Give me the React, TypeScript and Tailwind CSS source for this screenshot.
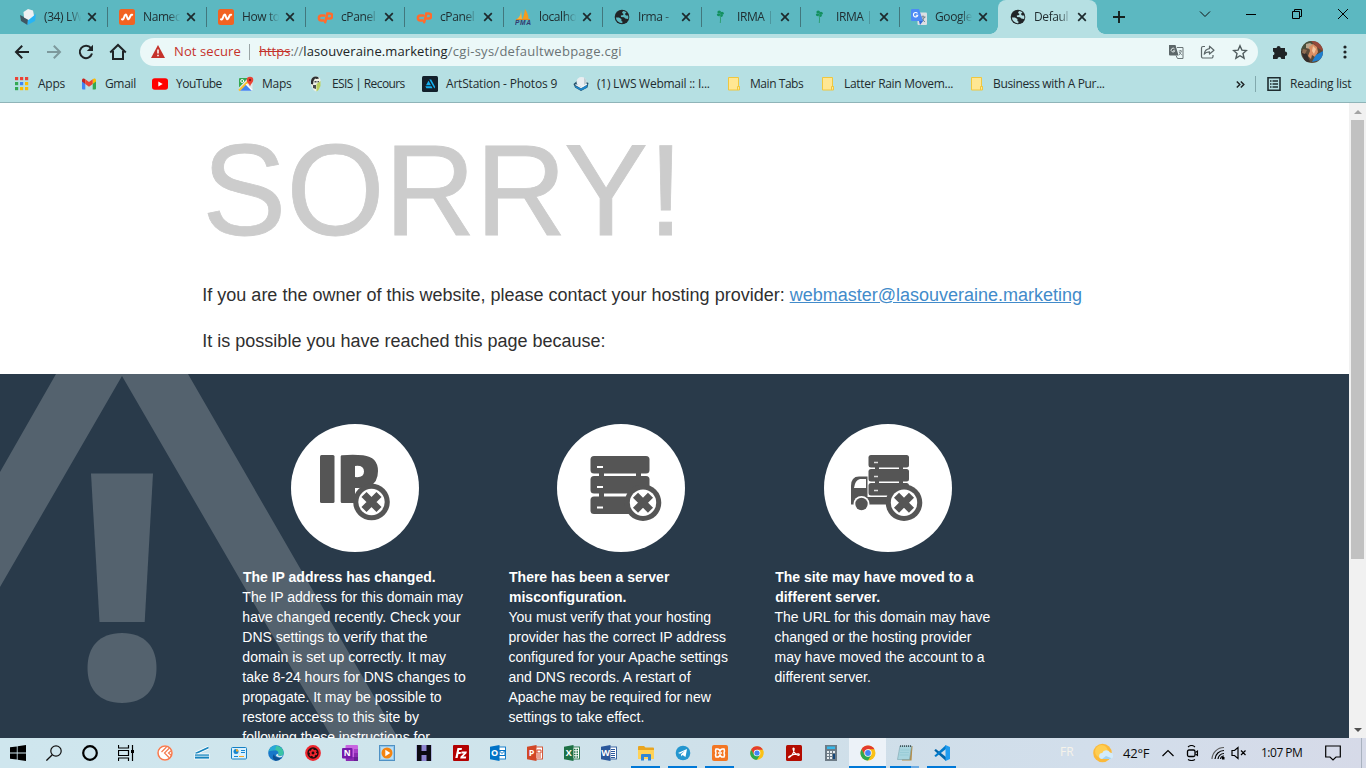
import React, { ReactNode } from 'react';

type IconProps = { children: ReactNode; className?: string; box?: string };

function Icon({ children, className = 'h-4 w-4', box = '0 0 16 16' }: IconProps) {
  return (
    <svg viewBox={box} className={`shrink-0 ${className}`} fill="none">
      {children}
    </svg>
  );
}

/* ---------- Favicons ---------- */

const LwsCube = () => (
  <Icon>
    <path d="M0 6 8 10 7.500 16 1 12Z" fill="#3f5661" />
    <path d="M8 10 16 5 15 12 7.500 16Z" fill="#27b4f5" />
    <path d="M3.500 3 8 0 13 1.500 14 6.500 8.500 11 4 8.500Z" fill="#eef0f2" />
  </Icon>
);

const Namecheap = () => (
  <Icon>
    <rect width="16" height="16" rx="2.500" fill="#f26322" />
    <path d="M3 10.300C4.200 10.800 4.800 9.400 5.800 6.300 7 4.600 7.400 6 8 8 8.800 10.600 9.200 10.800 10.200 9.400L11.800 6.200Q12.200 5.500 13.200 5.700" stroke="#fff" strokeWidth="2" strokeLinecap="round" />
  </Icon>
);

const CPanelIcon = () => (
  <Icon>
    <path d="M7.200 6.600H4.400a2.500 2.500 0 0 0 0 5h1.800M8.200 13.200 10.400 4.400h2.200a2.600 2.600 0 0 1 0 5.200H10" stroke="#ff6c2c" strokeWidth="2.500" strokeLinecap="round" />
  </Icon>
);

const PmaIcon = () => (
  <Icon>
    <path d="M6 1C6 5 5 8 2 10h5Z" fill="#fbb23b" />
    <path d="M10 0C9.500 4 8.500 8 7.500 10h6C13.500 6 12 3 10 0Z" fill="#f89b1c" />
    <path d="M1 10.500h14" stroke="#e28a20" />
    <text x="0" y="16" fontSize="6.600" fontWeight="bold" fontStyle="italic" fontFamily="Liberation Sans, sans-serif" fill="#33386f" textLength="16">PMA</text>
  </Icon>
);

const Globe = ({ bg }: { bg: string }) => (
  <Icon>
    <circle cx="8" cy="8" r="7.300" fill="#202427" />
    <path d="M9.400 2C7.600 3 7.800 4.400 9.300 4.700V6L6.800 6.600 7 8l3 .2 1.200 1.200 2.900.6a6.300 6.300 0 0 0 0-3.600L12 6.600 10.900 5l1.600-1.700Q11 2.200 9.400 2Z" fill={bg} />
    <path d="M1.900 8.400H5L7.400 10v2l1.200.8-.4 1.500A6.300 6.300 0 0 1 1.900 8.400Z" fill={bg} />
  </Icon>
);

const Clover = () => (
  <Icon>
    <g fill="#13905f">
      <ellipse cx="6.200" cy="3" rx="1.800" ry="1.500" />
      <ellipse cx="9" cy="4.200" rx="1.800" ry="1.500" />
      <ellipse cx="5.600" cy="5.800" rx="1.700" ry="1.400" />
      <ellipse cx="8.300" cy="6.600" rx="1.500" ry="1.300" />
    </g>
    <path d="M7 6Q8 10 7.300 14" stroke="#2fa074" />
  </Icon>
);

const TranslateFav = () => (
  <Icon>
    <rect x="6.500" y="3.500" width="9.500" height="12.500" rx="1" fill="#dcdfe3" />
    <path d="M9.500 8h5M12 6.500V8M10.500 13 13.600 8M10.500 9l3.300 4" stroke="#66757f" strokeWidth=".9" />
    <path d="M1 0h7l4 12H1a1 1 0 0 1-1-1V1a1 1 0 0 1 1-1Z" fill="#4c8bf5" />
    <path d="m8 12 4 0-3 4Z" fill="#3367d6" />
    <path d="M6.500 4.500a2.200 2.200 0 1 0 .3 1.700H4.800" stroke="#fff" strokeWidth="1.100" />
  </Icon>
);

const Close = () => (
  <Icon className="h-[10px] w-[10px]" box="0 0 10 10">
    <path d="m1.200 1.200 7.600 7.600m0-7.600L1.200 8.800" stroke="#1d2a2d" strokeWidth="1.700" />
  </Icon>
);

type TabData = { title: string; icon: ReactNode; active?: boolean };

const tabs: TabData[] = [
  { title: '(34) LW', icon: <LwsCube /> },
  { title: 'Namec', icon: <Namecheap /> },
  { title: 'How to', icon: <Namecheap /> },
  { title: 'cPanel', icon: <CPanelIcon /> },
  { title: 'cPanel', icon: <CPanelIcon /> },
  { title: 'localho', icon: <PmaIcon /> },
  { title: 'Irma -', icon: <Globe bg="#5cb8c1" /> },
  { title: 'IRMA |', icon: <Clover /> },
  { title: 'IRMA |', icon: <Clover /> },
  { title: 'Google', icon: <TranslateFav /> },
  { title: 'Defaul', icon: <Globe bg="#b6e0e3" />, active: true },
];

function Tab({ tab, divider }: { tab: TabData; divider: boolean }) {
  return (
    <div
      className={`relative flex h-[34px] w-[99px] shrink-0 items-center pl-3 ${tab.active ? 'rounded-t-lg bg-[#b6e0e3]' : ''}`}
    >
      {tab.icon}
      <div className="ml-2 w-[38px] [mask-image:linear-gradient(to_right,#000_66%,transparent_98%)]">
        <span className="block whitespace-nowrap text-[12px] tracking-[-0.4px] text-[#1f2c2f]">{tab.title}</span>
      </div>
      <div className="ml-[5px] flex">
        <Close />
      </div>
      {divider && <div className="absolute right-[-1px] top-[7px] h-5 w-px bg-[#42777d]" />}
      {tab.active && (
        <>
          <div className="absolute -left-2 bottom-0 h-2 w-2 bg-[radial-gradient(circle_at_0_0,transparent_7.5px,#b6e0e3_8px)]" />
          <div className="absolute -right-2 bottom-0 h-2 w-2 bg-[radial-gradient(circle_at_100%_0,transparent_7.5px,#b6e0e3_8px)]" />
        </>
      )}
    </div>
  );
}

function TabStrip() {
  return (
    <div className="flex h-[34px] bg-[#5cb8c1] pl-2">
      {tabs.map((t, i) => (
        <Tab key={i} tab={t} divider={i < 9} />
      ))}
      <div className="flex w-[44px] items-center justify-center">
        <Icon className="h-3 w-3" box="0 0 12 12">
          <path d="M6 0v12M0 6h12" stroke="#15211f" strokeWidth="1.900" />
        </Icon>
      </div>
      <div className="flex flex-1 items-center pb-[6px] pl-[58px]">
        <Icon className="h-3 w-3" box="0 0 12 12">
          <path d="m1 3.500 5 5 5-5" stroke="#111" />
        </Icon>
        <Icon className="ml-[34px] h-3 w-3" box="0 0 12 12">
          <path d="M1 6.500h10" stroke="#000" />
        </Icon>
        <Icon className="ml-[34px] h-3 w-3" box="0 0 12 12">
          <path d="M1.500 3.500h7v7h-7zM3.500 3.500v-2h7v7h-2" stroke="#000" />
        </Icon>
        <Icon className="ml-[34px] h-3 w-3" box="0 0 12 12">
          <path d="m1 1 10 10M11 1 1 11" stroke="#000" />
        </Icon>
      </div>
    </div>
  );
}

/* ---------- Toolbar ---------- */

function Toolbar() {
  return (
    <div className="flex h-9 items-center bg-[#b6e0e3] pl-[14px]">
      <Icon>
        <path d="M15 8H2M8.200 1.800 2 8l6.200 6.200" stroke="#1f2426" strokeWidth="2" />
      </Icon>
      <Icon className="ml-4 h-4 w-4">
        <path d="M1 8h13M7.800 1.800 14 8l-6.200 6.200" stroke="#7d999c" strokeWidth="2" />
      </Icon>
      <Icon className="ml-4 h-4 w-4">
        <path d="M13 4.200A6.200 6.200 0 1 0 14 9.600" stroke="#1f2426" strokeWidth="2" />
        <path d="M15 .8V7H8.800Z" fill="#1f2426" />
      </Icon>
      <Icon className="ml-[15px] h-[18px] w-[18px]" box="0 0 18 18">
        <path d="M1.200 9.400 9 2l7.800 7.400M4 8v8h10V8" stroke="#1f2426" strokeWidth="2" />
      </Icon>
      <div className="ml-[13px] flex h-7 w-[1118px] items-center rounded-full bg-[#ebf8f8] pl-[11px]">
        <Icon className="h-[14px] w-[14px]" box="0 0 14 14">
          <path d="M7 0 14 13H0Z" fill="#c5322b" />
          <path d="M7 4.500v4M7 9.700v1.500" stroke="#fff" strokeWidth="1.500" />
        </Icon>
        <span className="ml-[9px] w-[75px] whitespace-nowrap text-[13px] tracking-[0.1px] text-[#c5322b]">Not secure</span>
        <div className="h-4 w-px bg-[#9aa5a6]" />
        <div className="ml-[9px] flex-1 whitespace-nowrap text-[13px] text-[#6a7375]">
          <span className="text-[#c5322b] line-through">https</span>://
          <span className="tracking-[0.09px] text-[#202426]">lasouveraine.marketing</span>
          <span className="tracking-[0.27px]">/cgi-sys/defaultwebpage.cgi</span>
        </div>
        <Icon>
          <path d="M1 1h6.500l3 10.500H2a1 1 0 0 1-1-1Z" fill="#5c6769" />
          <path d="M9 3.500h6v11H9.500L8 11.500" stroke="#6a7577" />
          <path d="M6.600 5a1.900 1.900 0 1 0 .2 1.800H5" stroke="#dfe8e8" />
          <path d="M10.700 7h3.400M12.400 6v1M11 11.200 13.500 7.400M11 8l3 3.200" stroke="#6a7577" strokeWidth=".8" />
        </Icon>
        <Icon className="ml-4 h-4 w-4">
          <path d="M5 2.500H3A1.500 1.500 0 0 0 1.500 4v8.500A1.500 1.500 0 0 0 3 14h8.500a1.500 1.500 0 0 0 1.500-1.500V11" stroke="#5c6769" strokeWidth="1.200" />
          <path d="M9.500 2.200 14 6.200 9.500 10V7.800C7 7.700 5.300 8.600 4.200 10.200 4.600 7 6.500 5 9.500 4.600Z" stroke="#5c6769" strokeWidth="1.200" strokeLinejoin="round" />
        </Icon>
        <Icon className="ml-4 mr-[10px] h-4 w-4">
          <path d="m8 1.800 1.900 4.300 4.600.4L11 9.600l1.100 4.600L8 11.700l-4.100 2.500L5 9.600 1.500 6.500l4.600-.4Z" stroke="#505c5e" strokeWidth="1.400" />
        </Icon>
      </div>
      <Icon className="ml-[14px] h-4 w-4">
        <path d="M1 4h3.600a2 2 0 1 1 4 0H13v3.500a2.200 2.200 0 1 1 0 4.400V15H9.300a1.900 1.900 0 0 0-3.800 0H1v-3.700a1.900 1.900 0 0 0 0-3.700Z" fill="#1f2426" />
      </Icon>
      <svg viewBox="0 0 22 22" className="ml-[13px] h-[22px] w-[22px] shrink-0 rounded-full">
        <rect width="22" height="22" fill="#5a4a38" />
        <path d="M0 0h12L9 6 0 9Z" fill="#46503c" />
        <path d="M10 0h12v10l-5-3Z" fill="#96483a" />
        <path d="M5 3l4-1 3 2-3 4-4-1Z" fill="#b9a58b" />
        <path d="M8 6l4-3 4 3 1 5-3 5-3-2-1 4-3-3 2-5Z" fill="#d98d62" />
        <path d="m12 5 3 3-2 5-2-3Z" fill="#f1c6a0" />
        <path d="M15 14l7-4v8l-7 2-4 1 2-4Z" fill="#1e7fd0" />
        <path d="M0 10l6 3 3 8H4Z" fill="#332d2b" />
        <path d="M2 8l4 1-2 4-3-1Z" fill="#8f6d52" />
      </svg>
      <Icon className="ml-[14px] h-4 w-4">
        <g fill="#1f2426">
          <circle cx="8" cy="3" r="1.600" />
          <circle cx="8" cy="8" r="1.600" />
          <circle cx="8" cy="13" r="1.600" />
        </g>
      </Icon>
    </div>
  );
}

/* ---------- Bookmarks ---------- */

const appColors = ['#ea4335', '#ea4335', '#ea4335', '#34a853', '#4285f4', '#fbbc04', '#34a853', '#fbbc04', '#fbbc04'];

const AppsIcon = () => (
  <Icon>
    {appColors.map((c, i) => (
      <rect key={i} x={1 + (i % 3) * 5} y={1 + Math.floor(i / 3) * 5} width="3.200" height="3.200" fill={c} />
    ))}
  </Icon>
);

const GmailIcon = () => (
  <Icon>
    <path d="M1 4v8.500a1 1 0 0 0 1 1h2.300V7Z" fill="#4285f4" />
    <path d="M15 4v8.500a1 1 0 0 1-1 1h-2.300V7Z" fill="#34a853" />
    <path d="M1 4.200C1 2.400 2.900 2 4.300 3.200V8L1 5.500Z" fill="#c5221f" />
    <path d="M15 4.200c0-1.800-1.900-2.200-3.300-1V8L15 5.500Z" fill="#fbbc04" />
    <path d="M4.300 3.200 8 6l3.700-2.800V8L8 10.800 4.300 8Z" fill="#ea4335" />
  </Icon>
);

const YoutubeIcon = () => (
  <Icon>
    <rect y="2.300" width="16" height="11.500" rx="2.800" fill="#f00" />
    <path d="m6.300 5.600 4.400 2.500-4.400 2.500Z" fill="#fff" />
  </Icon>
);

const MapsIcon = () => (
  <Icon>
    <rect x="1" y="2" width="13.500" height="13" rx="1.500" fill="#e4e8ea" />
    <path d="M2 2h8L1 11.500V3a1 1 0 0 1 1-1Z" fill="#34a853" />
    <path d="M1.500 14.700 8 8.200l6.300 6.500Z" fill="#4285f4" />
    <path d="m1 14.500 11-11" stroke="#fbc02d" strokeWidth="2" />
    <path d="m8.200 8.300 6 6" stroke="#fff" strokeWidth="1.300" />
    <path d="M12 10.500C11.500 8 8.700 6.500 8.700 4a3.300 3.300 0 0 1 6.600 0c0 2.500-2.800 4-3.300 6.500Z" fill="#ea4335" />
    <circle cx="12" cy="4" r="1.200" fill="#8c1d18" />
    <circle cx="4.200" cy="5" r="1.500" stroke="#fff" />
  </Icon>
);

const EsisIcon = () => (
  <Icon>
    <path d="M3 4q1-3.500 5-3.500T12.500 4L12 10l-2 4-2 1.500L5.500 14 3 9Z" fill="#eef0e4" />
    <path d="M3 5Q3.500.5 8 .5q2.500 0 3 2L8.500 3 7 2.500 5.500 5 5 8.500 3 8Z" fill="#2e2f31" />
    <path d="M6.500 5h2v1.500h-2zM9.500 5h1.500v1.500H9.500zM5 9h3v4L5 12z" fill="#474a4d" />
    <path d="m8.500 8 4-3v5l-2 4-2 1.500Z" fill="#b8cf5d" />
  </Icon>
);

const ArtStationIcon = () => (
  <Icon>
    <rect width="16" height="16" rx="1.500" fill="#12202b" />
    <path d="M7.300 3.500h1.900l4 7.500-.8 1.500ZM6.500 4.800 9 9.200H4ZM3.300 10.200h6.200l1.100 2H4.400Z" fill="#13aff0" />
  </Icon>
);

const LwsMail = () => (
  <Icon>
    <path d="m.5 8 6-5 9 4-1 4.500L8 15l-6-3.500Z" fill="#23506a" />
    <path d="m1.500 9.500 6.500 3 6.500-4-1 3.500L8 14.600l-5-2.800Z" fill="#1c86cc" />
    <circle cx="8.500" cy="6" r="5" fill="#e9eef1" />
    <path d="M11 1.700a5 5 0 0 1 0 8.600Z" fill="#c2ced4" />
    <path d="m2.500 8.500 5.500 3 6-3.500" stroke="#f4f8fa" strokeWidth="1.200" />
  </Icon>
);

const FolderMark = () => (
  <Icon>
    <path d="M2.500 1.500h10v9h1v3.500h-11Z" fill="#ffe793" stroke="#efc73f" />
    <path d="M11.500 14v-3.500h2" stroke="#efc73f" />
  </Icon>
);

const bookmarks = [
  { label: 'Apps', icon: <AppsIcon />, cls: 'w-[67px]' },
  { label: 'Gmail', icon: <GmailIcon />, cls: 'w-[71px] tracking-[-0.35px]' },
  { label: 'YouTube', icon: <YoutubeIcon />, cls: 'w-[86px] tracking-[-0.5px]' },
  { label: 'Maps', icon: <MapsIcon />, cls: 'w-[70px]' },
  { label: 'ESIS | Recours', icon: <EsisIcon />, cls: 'w-[114px] tracking-[-0.6px]' },
  { label: 'ArtStation - Photos 9', icon: <ArtStationIcon />, cls: 'w-[151px] tracking-[-0.2px]' },
  { label: '(1) LWS Webmail :: I...', icon: <LwsMail />, cls: 'w-[153px]' },
  { label: 'Main Tabs', icon: <FolderMark />, cls: 'w-[94px] tracking-[-0.45px]' },
  { label: 'Latter Rain Movem...', icon: <FolderMark />, cls: 'w-[149px] tracking-[-0.3px]' },
  { label: 'Business with A Pur...', icon: <FolderMark />, cls: 'w-[150px] tracking-[-0.35px]' },
];

function BookmarksBar() {
  return (
    <div className="flex h-[33px] items-center border-b border-[#8fb4b8] bg-[#b6e0e3] pb-1 pl-[14px] text-[12px] tracking-[-0.25px] text-[#1f2c2f]">
      {bookmarks.map((b) => (
        <div key={b.label} className={`flex shrink-0 items-center gap-2 whitespace-nowrap ${b.cls}`}>
          {b.icon}
          {b.label}
        </div>
      ))}
      <Icon className="ml-[117px] h-[9px] w-[9px]" box="0 0 9 9">
        <path d="m.8 1.500 3 3-3 3m4-6 3 3-3 3" stroke="#1f2426" strokeWidth="1.500" />
      </Icon>
      <div className="ml-[10px] h-4 w-px bg-[#82a9ad]" />
      <Icon className="ml-[10px] h-4 w-4">
        <path d="M2 1.800h12v12.400H2z" stroke="#1f2c2f" strokeWidth="1.600" />
        <path d="M4 5h1.500M4 8h1.500M4 11h1.500M6.500 5h5.500M6.500 8h5.500M6.500 11h5.500" stroke="#1f2c2f" strokeWidth="1.300" />
      </Icon>
      <span className="ml-[8px] whitespace-nowrap">Reading list</span>
    </div>
  );
}

/* ---------- Page ---------- */

const CrossBadge = ({ cx, cy }: { cx: number; cy: number }) => (
  <g>
    <circle cx={cx} cy={cy} r="18.300" fill="#555" />
    <circle cx={cx} cy={cy} r="13.200" fill="#fff" />
    <path
      d={`M${cx - 7.5} ${cy - 7.5}l15 15m0-15l-15 15`}
      stroke="#555"
      strokeWidth="7.200"
    />
  </g>
);

const IpArt = () => (
  <>
    <rect x="29" y="31" width="14.500" height="48" rx="1.500" fill="#555" />
    <path fillRule="evenodd" d="M51 31.200q11-1 21 0Q87 33 87 47q0 12-9 15.500-5 2-14 1.500V79H51q-1.300 0-1.300-1.500v-45Q49.700 31.200 51 31.200ZM64 42v11q9 1 9-5.500T64 42Z" fill="#555" />
    <CrossBadge cx={80.5} cy={78} />
  </>
);

const ServerArt = () => (
  <>
    <g fill="#555">
      <rect x="33.500" y="32" width="59" height="17.500" rx="3.500" />
      <rect x="33.500" y="52" width="59" height="17.500" rx="3.500" />
      <rect x="33.500" y="72.500" width="59" height="17.500" rx="3.500" />
      <path d="M42 48h5v26h-5zM79 48h5v26h-5z" />
    </g>
    <path d="M40 43h6M40 63h6M40 83.500h6" stroke="#fff" strokeWidth="2" />
    <CrossBadge cx={86} cy={78.7} />
  </>
);

const TruckArt = () => (
  <>
    <g fill="#555">
      <rect x="44.500" y="31" width="40.500" height="12.500" rx="2.500" />
      <rect x="44.500" y="45" width="40.500" height="12.500" rx="2.500" />
      <rect x="44.500" y="59" width="40.500" height="12.500" rx="2.500" />
      <path d="M51 43h4v17h-4zM75 43h4v17h-4z" />
      <path fillRule="evenodd" d="M27 80.500V62q0-9.500 8-9.500h8.500V73H70v7.500ZM30 64h12v-9h-6q-5 1-6 9Z" />
    </g>
    <path d="M50 38.500h4M50 52.500h4M50 66.500h4" stroke="#ddd" strokeWidth="1.300" />
    <circle cx="37.500" cy="80" r="8" fill="#fff" />
    <circle cx="37.500" cy="80" r="6.200" fill="#555" />
    <CrossBadge cx={80} cy={78.7} />
  </>
);

const reasons = [
  {
    title: 'The IP address has changed.',
    art: <IpArt />,
    body: 'The IP address for this domain may have changed recently. Check your DNS settings to verify that the domain is set up correctly. It may take 8-24 hours for DNS changes to propagate. It may be possible to restore access to this site by following these instructions for',
  },
  {
    title: 'There has been a server misconfiguration.',
    art: <ServerArt />,
    body: 'You must verify that your hosting provider has the correct IP address configured for your Apache settings and DNS records. A restart of Apache may be required for new settings to take effect.',
  },
  {
    title: 'The site may have moved to a different server.',
    art: <TruckArt />,
    body: 'The URL for this domain may have changed or the hosting provider may have moved the account to a different server.',
  },
];

function DefaultPage() {
  return (
    <div className="flex min-w-0 flex-1 flex-col overflow-hidden bg-white font-['Liberation_Sans',Arial,sans-serif] text-[#2f2f2f]">
      <div className="h-[271px] shrink-0 pl-[202.35px] pt-[26px]">
        <h1 className="origin-[0_107px] scale-y-[1.03] text-[126px] leading-[126px] text-[#ccc] [-webkit-text-stroke:0.8px_#ccc]">
          SORRY!
        </h1>
        <p className="mt-[27px] text-[18px] leading-[26px]">
          If you are the owner of this website, please contact your hosting provider:{' '}
          <a className="text-[#428bca] underline">webmaster@lasouveraine.marketing</a>
        </p>
        <p className="mt-5 text-[18px] leading-[26px]">It is possible you have reached this page because:</p>
      </div>
      <div className="relative flex-1 bg-[#293a4a]">
        <svg viewBox="0 0 420 364" className="absolute left-0 top-0 h-[364px] w-[420px]">
          <g fill="#54626e">
            <path d="M56 0H188L398 364H332L122 2 0 213V98Z" />
            <path d="M91 99.500h62L144.700 248H99.500Z" />
            <path d="M122 259c23 0 34.500 14 34.500 35S145 329 122 329s-34.500-14-34.500-35S99 259 122 259Z" />
          </g>
        </svg>
        <div className="relative flex gap-[40.1px] pl-[242.35px] pt-[50px]">
          {reasons.map((r) => (
            <div key={r.title} className="w-[226px] shrink-0 text-[14px] leading-5 text-white">
              <svg viewBox="0 0 128 128" className="mx-auto mb-[15px] block h-32 w-32">
                <circle cx="64" cy="64" r="64" fill="#fff" />
                {r.art}
              </svg>
              <strong className="block pl-[0.6px] font-bold">{r.title}</strong>
              <p>{r.body}</p>
            </div>
          ))}
        </div>
      </div>
    </div>
  );
}

function Scrollbar() {
  return (
    <div className="flex w-[17px] shrink-0 flex-col items-center bg-[#f1f1f1]">
      <div className="flex h-[17px] items-center">
        <Icon className="h-2 w-2" box="0 0 8 8">
          <path d="m0 6 4-4 4 4Z" fill="#a3a3a3" />
        </Icon>
      </div>
      <div className="h-[439px] w-[13px] bg-[#c1c1c1]" />
      <div className="mt-auto flex h-[17px] items-center">
        <Icon className="h-2 w-2" box="0 0 8 8">
          <path d="m0 2 4 4 4-4Z" fill="#505050" />
        </Icon>
      </div>
    </div>
  );
}

/* ---------- Taskbar ---------- */

const glyphFont = 'Open Sans, sans-serif';

const Office = ({ c, letter, children }: { c: string; letter: string; children: ReactNode }) => (
  <>
    <rect x="8" y="2" width="7.500" height="12" fill="#fff" stroke={c} strokeWidth=".9" />
    {children}
    <path d="M0 1.800 9.500 0v16L0 14.200Z" fill={c} />
    <text x="4.700" y="11.300" textAnchor="middle" fontSize="9" fontWeight="bold" fontFamily={glyphFont} fill="#fff">{letter}</text>
  </>
);

const Chrome = () => (
  <>
    <circle cx="8" cy="8" r="7.500" fill="#fbc116" />
    <path d="M1.500 4.250A7.500 7.500 0 0 1 14.500 4.250H8L4.700 9.900Z" fill="#e33b2e" />
    <path d="M1.500 4.250A7.500 7.500 0 0 0 8 15.500L11.300 9.900H4.700Z" fill="#2da94f" />
    <circle cx="8" cy="8" r="3.700" fill="#fff" />
    <circle cx="8" cy="8" r="2.900" fill="#4285f4" />
  </>
);

type TaskItem = { name: string; art: ReactNode; state?: 'open' | 'active' };

const taskItems: TaskItem[] = [
  {
    name: 'clock',
    art: (
      <>
        <circle cx="8" cy="8" r="7.800" fill="#fff" />
        <circle cx="8" cy="8" r="7" stroke="#f47b50" strokeWidth="1.600" />
        <path d="M12.500 3 7.500 8l5 5M14.500 5.500 11.500 8l3 2.500M9.500 2 4.500 7" stroke="#f47b50" strokeWidth="1.200" />
      </>
    ),
  },
  {
    name: 'scanner',
    art: (
      <>
        <path d="M1.500 8.500 14.500 2.500" stroke="#fff" strokeWidth="3.400" />
        <path d="M1.500 8.500 14.500 2.500" stroke="#1784bd" strokeWidth="1.700" />
        <path d="M.5 9h15v5H.5z" fill="#1784bd" stroke="#fff" strokeWidth=".8" />
        <path d="M1 11.200h14" stroke="#d9eef7" />
      </>
    ),
  },
  {
    name: 'control',
    art: (
      <>
        <rect x=".5" y="2.500" width="15" height="11.500" rx="1" fill="#d9f1ff" stroke="#1580c4" />
        <circle cx="5" cy="6.500" r="2.500" fill="#1686d0" />
        <path d="M5 6.500V4a2.500 2.500 0 0 1 2.500 2.500Z" fill="#f7a823" />
        <path d="M10 5.500h4M10 7.500h4M3 11.500h4" stroke="#1686d0" />
        <path d="M8 11.500h5" stroke="#f7a823" />
      </>
    ),
  },
  {
    name: 'edge',
    art: (
      <>
        <circle cx="8" cy="8" r="7.800" fill="#1878c9" />
        <path d="M.5 6.500A7.800 7.800 0 0 1 15.800 8q-.3 3-3.600 2.800-3-.2-1.700-2.200Q10.500 5.500 7 5.300 3 5 .5 6.500Z" fill="#3bc3a5" />
        <path d="M.5 6.500Q3 .4 8.500.3L7 5.300Q3 5 .5 6.500Z" fill="#27a9d8" />
        <path d="M6 9q.5 4.500 7.500 3.700-3 3.800-6.500 3Q3 13 6 9Z" fill="#0d4f91" />
        <path d="M10.500 8.600q-1.500 2.300 1.700 2.400l3.200-.5q-3 3.500-7.500.5 0-2 2.600-2.400Z" fill="#d2e5ee" />
      </>
    ),
  },
  {
    name: 'gear',
    art: (
      <>
        <circle cx="8" cy="8" r="7.900" fill="#f0262f" />
        <circle cx="8" cy="8" r="5.700" fill="#200b0d" />
        <circle cx="8" cy="8" r="2.300" stroke="#f0262f" strokeWidth="1.700" />
        <circle cx="8" cy="8" r="3.600" stroke="#f0262f" strokeWidth="1.300" strokeDasharray="1.900 1.870" />
      </>
    ),
  },
  {
    name: 'onenote',
    art: (
      <>
        <rect x="3.500" width="12.500" height="16" rx="1" fill="#c865e0" />
        <path d="M12 4h4v4h-4z" fill="#a83fc8" />
        <path d="M12 8h4v4h-4zM4 12h8v4H4z" fill="#8a2bb0" />
        <path d="M12 12h4v4h-4z" fill="#6b1f95" />
        <rect y="3" width="10.500" height="10.500" rx="1" fill="#7719aa" />
        <text x="5.200" y="11.300" textAnchor="middle" fontSize="8.500" fontWeight="bold" fontFamily={glyphFont} fill="#fff">N</text>
      </>
    ),
  },
  {
    name: 'player',
    art: (
      <>
        <rect x=".5" y=".5" width="15" height="15" fill="#8fc4ea" stroke="#4f91c4" />
        <path d="M2 2h12v12H2z" fill="#b9def5" />
        <circle cx="8" cy="8" r="5.500" fill="#f58410" />
        <path d="m6.300 4.800 5 3.200-5 3.200Z" fill="#fff" />
      </>
    ),
  },
  {
    name: 'heidi',
    art: (
      <>
        <rect x=".5" width="15" height="16" fill="#8d84cf" />
        <path d="M1 0h4.500v6h5V0H15v16h-4.500v-6h-5v6H1Z" fill="#0c0b12" />
      </>
    ),
  },
  {
    name: 'filezilla',
    art: (
      <>
        <rect width="16" height="16" rx="1" fill="#b30000" />
        <path d="M4.500 3H9l-.4 2H6.200l-.4 2H8l-.4 2H5.400l-.8 4H2.300Z" fill="#fff" />
        <path d="M8.500 6.500h5.300l-.3 1.800-3.300 3.100h3l-.4 2H7.200l.4-2 3.200-3H8.200Z" fill="#fff" />
      </>
    ),
  },
  { name: 'outlook', art: <Office c="#0072c6" letter="O"><path d="M9 5.500h6v5H9zm0 0 3 3 3-3" stroke="#0072c6" fill="#fff" /></Office> },
  { name: 'powerpoint', art: <Office c="#d24726" letter="P"><path d="M10 5h4v3h-4zM10 10h4M10 12h4" stroke="#d24726" /></Office> },
  { name: 'excel', art: <Office c="#1e7145" letter="X"><path d="M10 4.500h1.500M12.500 4.500H14M10 7h1.500M12.500 7H14M10 9.500h1.500M12.500 9.500H14M10 12h1.500M12.500 12H14" stroke="#1e7145" strokeWidth="1.400" /></Office> },
  { name: 'word', art: <Office c="#2b579a" letter="W"><path d="M10 4.500h4M10 6.500h4M10 8.500h4M10 10.500h4M10 12.500h4" stroke="#2b579a" /></Office> },
  {
    name: 'explorer',
    state: 'open',
    art: (
      <>
        <path d="M0 2q0-1 1-1h5l1.500 1.500H15q1 0 1 1V6H0Z" fill="#e9a520" />
        <path d="M0 5h16v9H0Z" fill="#ffd257" />
        <path d="M3 15.500V10q0-1 1-1h8q1 0 1 1v5.500h-3V12H6v3.500Z" fill="#2f86d6" />
      </>
    ),
  },
  {
    name: 'telegram',
    state: 'open',
    art: (
      <>
        <circle cx="8" cy="8" r="7.300" fill="#2496cf" />
        <path d="m3 8 9-4-1.500 8-3-2-1.200 1.600L6 9.300l4-3.600-5 3Z" fill="#fff" />
      </>
    ),
  },
  {
    name: 'xampp',
    state: 'open',
    art: (
      <>
        <rect width="16" height="16" rx="2" fill="#f37623" />
        <path d="M4 4h1.500q2 0 2.500 2.500Q8.500 4 10.500 4H12q1 2 0 4 1 2 0 4h-1.500Q8.500 12 8 9.500 7.500 12 5.500 12H4Q3 10 4 8 3 6 4 4ZM6 8h4" stroke="#fff" strokeWidth="1.600" />
      </>
    ),
  },
  { name: 'chrome', art: <g transform="translate(.8 .8) scale(.9)"><Chrome /></g> },
  {
    name: 'acrobat',
    art: (
      <>
        <rect width="16" height="16" rx="1.500" fill="#b30b00" />
        <path d="M3 12.500c2-.6 5-4.500 5.200-8.500.1-1.400-1.500-1.200-1.200.2.500 3 3.500 6 5.500 6.200 1.200 0 1.100-1.500-.3-1.500-3 0-6 .8-8.700 2.300-1.400 1-.8 1.600-.5 1.300Z" stroke="#fff" strokeWidth="1.100" />
      </>
    ),
  },
  {
    name: 'calculator',
    art: (
      <>
        <rect x="2" width="12" height="16" fill="#6d7b86" />
        <rect x="4" y="1.500" width="8" height="2.500" fill="#35b8ea" />
        <path d="M4 7h2M7 7h2M4 10h2M7 10h2M4 13h2M7 13h2M10 7h2" stroke="#e6ecef" strokeWidth="1.800" />
        <path d="M11 9v5" stroke="#15477a" strokeWidth="2" />
      </>
    ),
  },
  { name: 'chrome-active', state: 'active', art: <Chrome /> },
  {
    name: 'notepad',
    state: 'open',
    art: (
      <>
        <path d="M4 1h11.500L14.500 15.500H5Z" fill="#b38d48" />
        <path d="M3 1h11.500L12.500 14.500H.5Z" fill="#a9d5df" stroke="#7aa5ae" strokeWidth=".6" />
        <path d="M3.500 5h9M3 7.500h9M2.500 10h9" stroke="#8fc6d1" strokeWidth=".6" />
        <path d="M3 1.200h11.500" stroke="#46555b" strokeWidth="1.800" strokeDasharray="1 1" />
      </>
    ),
  },
  {
    name: 'vscode',
    state: 'open',
    art: (
      <>
        <path d="m.3 5.300 1.500-1.300L12 12v4L.8 6Z" fill="#0065a9" />
        <path d="M.3 10.700 12 0v4L1.800 12Z" fill="#007acc" />
        <path d="m11.500 0 4.500 2v12l-4.500 2Z" fill="#1f9cf0" />
      </>
    ),
  },
];

function TaskButton({ item }: { item: TaskItem }) {
  return (
    <div
      className={`relative flex h-[30px] w-[37px] shrink-0 items-center justify-center ${item.state === 'active' ? 'bg-[#ecf2f8]' : ''}`}
    >
      <Icon>{item.art}</Icon>
      {item.state && (
        <div
          className={`absolute bottom-0 h-[2px] bg-[#0078d7] ${item.state === 'active' ? 'inset-x-0' : 'inset-x-[4px]'}`}
        />
      )}
      {item.name === 'notepad' && <div className="absolute bottom-0 right-[4px] h-[2px] w-2 bg-[#6cabe3]" />}
    </div>
  );
}

function Taskbar() {
  return (
    <div className="flex h-[30px] shrink-0 items-center bg-[linear-gradient(90deg,#cfe6ee_0%,#cfe5ec_30%,#cfdfe9_60%,#d2deeb_80%,#d6dae8_100%)]">
      <Icon className="ml-[10px] h-4 w-4">
        <path d="M0 2.300 6.800 1.400v6.100H0zM7.600 1.300 16 0v7.500H7.600zM0 8.400h6.800v6.200L0 13.700zM7.600 8.400H16V16l-8.400-1.300z" fill="#000" />
      </Icon>
      <Icon className="ml-5 h-4 w-4">
        <circle cx="10" cy="6" r="5.200" stroke="#111" strokeWidth="1.200" />
        <path d="M6.300 9.700.4 15.600" stroke="#111" strokeWidth="1.300" />
      </Icon>
      <Icon className="ml-5 h-4 w-4">
        <circle cx="8" cy="8" r="6.800" stroke="#000" strokeWidth="2.200" />
      </Icon>
      <Icon className="ml-5 h-4 w-4">
        <path d="M.5 0v3h10V0M.5 16v-3h10v3M.5 5.500h10v5H.5zM14.500 0v16" stroke="#000" strokeWidth="1.200" />
        <path d="M13 5h3v3h-3z" fill="#000" />
      </Icon>
      <div className="ml-[12px] flex">
        {taskItems.map((t) => (
          <TaskButton key={t.name} item={t} />
        ))}
      </div>
      <span className="ml-[100px] w-[33px] pb-[3px] text-[12px] text-[#f6f3ea]">FR</span>
      <Icon className="h-5 w-5" box="0 0 20 20">
        <circle cx="9.500" cy="10" r="9.300" fill="#fbb93a" />
        <circle cx="8.500" cy="8.500" r="6.500" fill="#ffce52" />
        <path d="M9 16a3 3 0 0 1 .2-6A4.200 4.200 0 0 1 17 9.600 3.200 3.200 0 0 1 17 16Z" fill="#d3ecfb" />
        <path d="M9 16h8l1.500-.8L13 13Z" fill="#9fd2f2" />
      </Icon>
      <span className="ml-[10px] w-[39px] whitespace-nowrap pt-px text-[13px] tracking-[-0.2px] text-[#0b0b0b]">42°F</span>
      <Icon className="h-3 w-3" box="0 0 12 12">
        <path d="m.5 9 5.500-5.500L11.500 9" stroke="#000" strokeWidth="1.200" />
      </Icon>
      <Icon className="ml-3 h-4 w-[14px]" box="0 0 14 16">
        <rect x="1.500" y="5" width="7.500" height="6.500" rx="1.500" stroke="#000" strokeWidth="1.300" />
        <path d="m9.500 7.500 2-1.500v4.500l-2-1.500M2 2Q5.500-1 9 2M2 14.500q3.500 2 7 0" stroke="#000" strokeWidth="1.100" />
      </Icon>
      <Icon className="ml-[11px] h-[14px] w-[14px]" box="0 0 14 14">
        <path d="M1 13A12 12 0 0 1 13 1.500" stroke="#555" strokeWidth="1.100" />
        <path d="M4 13a9 9 0 0 1 9-8.500M7 13a6 6 0 0 1 6-5.500M9.500 13a3.500 3.500 0 0 1 3.500-3" stroke="#000" strokeWidth="1.200" />
        <path d="M11 11h2.500v2.500H11z" fill="#000" />
      </Icon>
      <Icon className="ml-[6px] h-4 w-4">
        <path d="M1 5.500h2.500L7 2.500v11L3.500 10.500H1zM10 5.500l4.500 4.500m0-4.500L10 10" stroke="#000" strokeWidth="1.200" />
      </Icon>
      <span className="ml-[14px] w-[64px] whitespace-nowrap text-[12px] tracking-[-0.5px] text-[#0b0b0b]">1:07 PM</span>
      <Icon className="h-4 w-4">
        <path d="M.7 1h14.600v11H11l-3 3-3-3H.7Z" stroke="#000" strokeWidth="1.200" />
      </Icon>
      <div className="ml-auto mr-1 h-[30px] w-px bg-[#a9b2bf]" />
    </div>
  );
}

export default function App() {
  return (
    <div className="flex h-[768px] w-[1366px] flex-col overflow-hidden font-['Open_Sans','Noto_Sans',sans-serif]">
      <TabStrip />
      <Toolbar />
      <BookmarksBar />
      <div className="flex min-h-0 flex-1 overflow-hidden">
        <DefaultPage />
        <Scrollbar />
      </div>
      <Taskbar />
    </div>
  );
}
